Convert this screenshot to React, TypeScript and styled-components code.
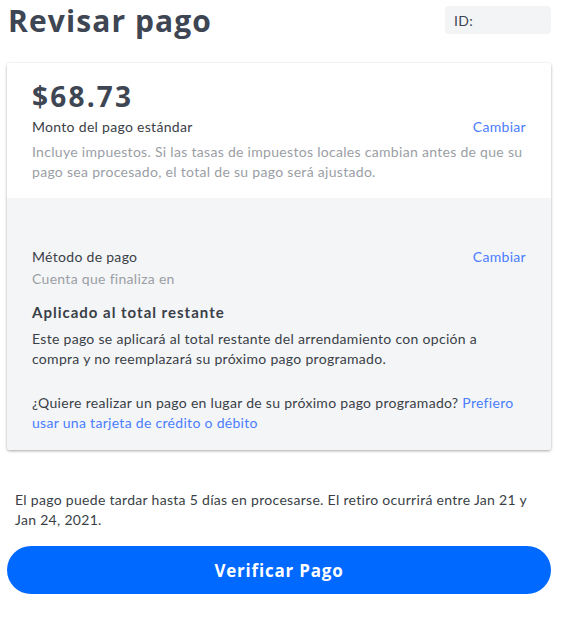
import React from "react";
import styled, { createGlobalStyle } from "styled-components";

const Global = createGlobalStyle`
  html, body { margin: 0; padding: 0; background: #ffffff; }
  body { font-family: "Lato", "Liberation Sans", sans-serif; color: #3a3f47; letter-spacing: 0.3px; }
  * { box-sizing: border-box; }
`;

const Page = styled.div`
  width: 571px;
  padding: 6px 20px 0 7px;
`;

const Header = styled.header`
  display: flex;
  justify-content: space-between;
  align-items: flex-start;
  height: 57px;
`;

const Title = styled.h1`
  margin: 0;
  padding-left: 1px;
  font-family: "Open Sans", "Noto Sans", sans-serif;
  font-weight: 700;
  font-size: 30px;
  line-height: 30px;
  color: #3e4553;
  letter-spacing: 1.1px;
`;

const IdBox = styled.div`
  width: 106px;
  height: 28px;
  background: #f3f4f6;
  border-radius: 4px;
  padding: 0 9px;
  display: flex;
  align-items: center;
  font-size: 14px;
  color: #3e4553;
`;

const Card = styled.section`
  border-radius: 3px;
  box-shadow: 0 1px 3px rgba(0, 0, 0, 0.35);
  overflow: hidden;
`;

const Section = styled.div<{ $grey?: boolean; $top: number; $bottom: number }>`
  background: ${(p) => (p.$grey ? "#f4f5f7" : "#ffffff")};
  padding: ${(p) => p.$top}px 25px ${(p) => p.$bottom}px 25px;
`;

const Amount = styled.div`
  font-family: "Open Sans", "Noto Sans", sans-serif;
  font-weight: 700;
  font-size: 28px;
  line-height: 32px;
  color: #3e4553;
  letter-spacing: 2.2px;
  margin-bottom: 5px;
`;

const Row = styled.div<{ $mb?: number }>`
  display: flex;
  justify-content: space-between;
  align-items: center;
  margin-bottom: ${(p) => p.$mb ?? 0}px;
`;

const Label = styled.div`
  font-size: 14px;
  line-height: 20px;
  color: #3a3f47;
`;

const Link = styled.a`
  font-size: 14px;
  line-height: 20px;
  color: #4a7dff;
  text-decoration: none;
  cursor: pointer;
`;

const Muted = styled.p<{ $mb?: number }>`
  margin: 0 0 ${(p) => p.$mb ?? 0}px;
  font-size: 14px;
  line-height: 20px;
  color: #9a9ea5;
`;

const SubTitle = styled.h2`
  margin: 0 0 7px;
  font-size: 15px;
  font-weight: 700;
  line-height: 20px;
  letter-spacing: 1px;
  color: #3a3f47;
`;

const Body = styled.p<{ $mb?: number }>`
  margin: 0 0 ${(p) => p.$mb ?? 0}px;
  font-size: 14px;
  line-height: 20px;
  color: #3a3f47;
`;

const Note = styled.p`
  margin: 40px 0 16px;
  padding: 0 8px;
  font-size: 14px;
  line-height: 20px;
  color: #3a3f47;
`;

const Button = styled.button`
  width: 100%;
  height: 48px;
  border: none;
  border-radius: 24px;
  background: #0069ff;
  color: #ffffff;
  font-family: "Open Sans", "Noto Sans", sans-serif;
  font-weight: 700;
  font-size: 17px;
  letter-spacing: 0.8px;
  cursor: pointer;
`;

export default function App() {
  return (
    <>
      <Global />
      <Page>
        <Header>
          <Title>Revisar pago</Title>
          <IdBox>ID:</IdBox>
        </Header>
        <Card>
          <Section $top={17} $bottom={16}>
            <Amount>$68.73</Amount>
            <Row $mb={5}>
              <Label>Monto del pago estándar</Label>
              <Link>Cambiar</Link>
            </Row>
            <Muted>
              Incluye impuestos. Si las tasas de impuestos locales cambian antes de que su pago sea procesado, el total de su pago será ajustado.
            </Muted>
          </Section>
          <Section $grey $top={49} $bottom={17}>
            <Row $mb={2}>
              <Label>Método de pago</Label>
              <Link>Cambiar</Link>
            </Row>
            <Muted $mb={13}>Cuenta que finaliza en</Muted>
            <SubTitle>Aplicado al total restante</SubTitle>
            <Body $mb={24}>
              Este pago se aplicará al total restante del arrendamiento con opción a compra y no reemplazará su próximo pago programado.
            </Body>
            <Body>
              ¿Quiere realizar un pago en lugar de su próximo pago programado? <Link>Prefiero usar una tarjeta de crédito o débito</Link>
            </Body>
          </Section>
        </Card>
        <Note>
          El pago puede tardar hasta 5 días en procesarse. El retiro ocurrirá entre Jan 21 y Jan 24, 2021.
        </Note>
        <Button>Verificar Pago</Button>
      </Page>
    </>
  );
}
